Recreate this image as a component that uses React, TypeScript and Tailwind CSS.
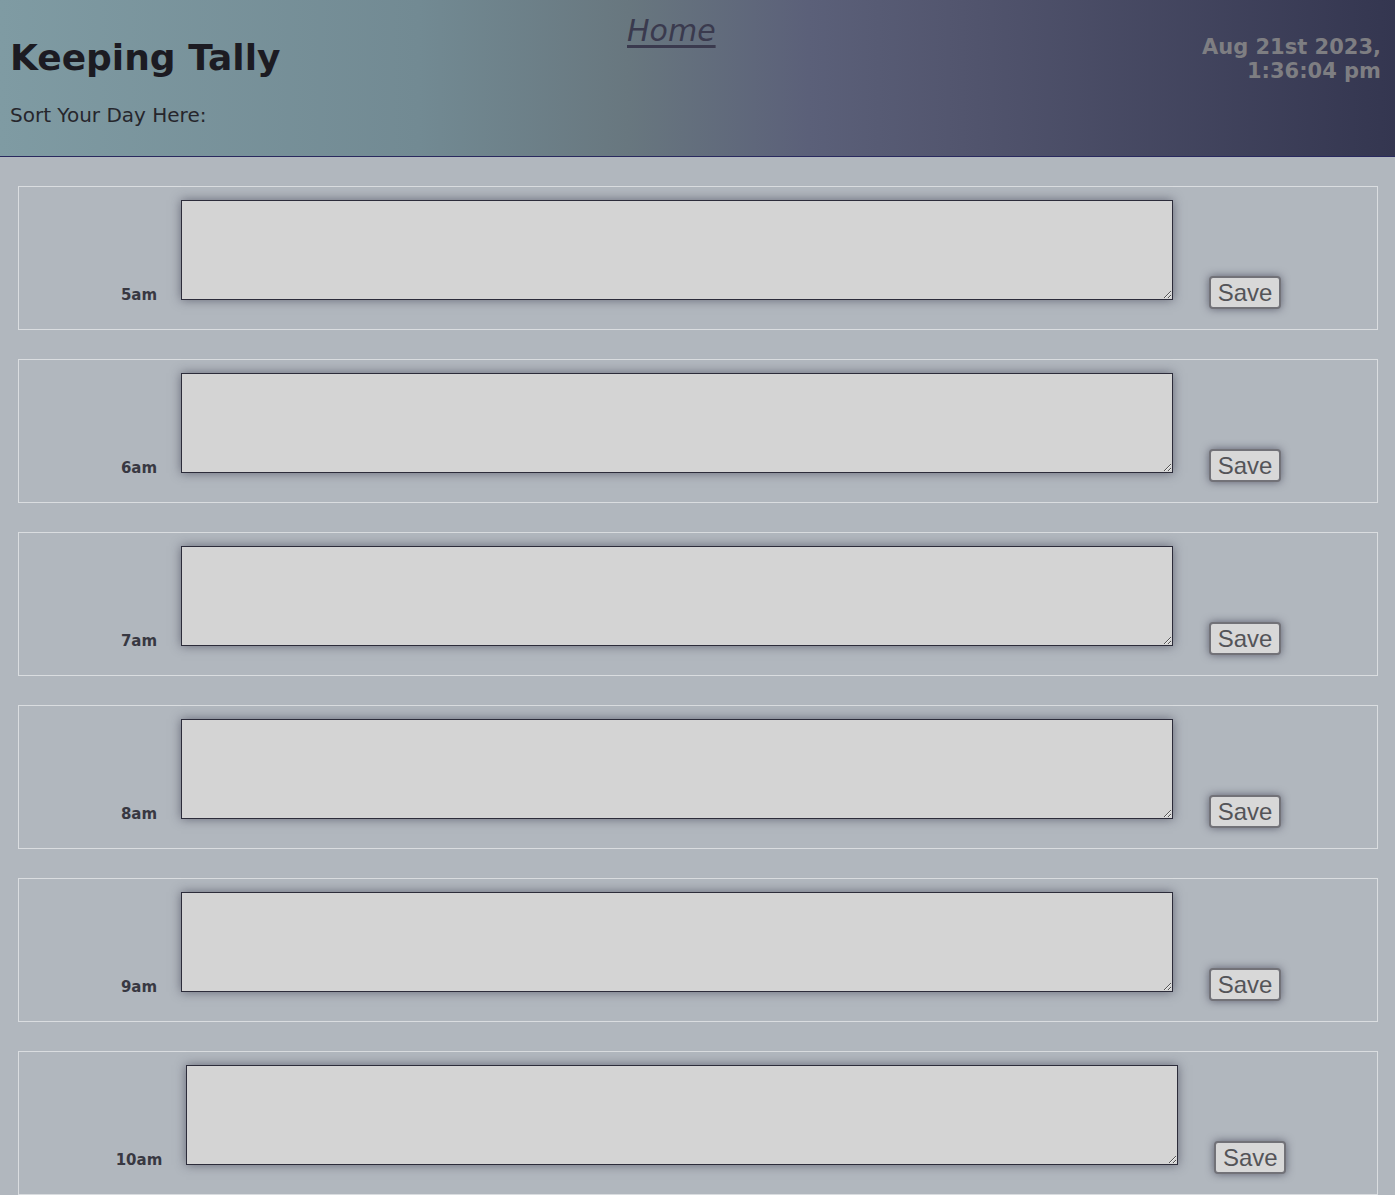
import React from "react";

const hours = ["5am", "6am", "7am", "8am", "9am", "10am", "11am", "12pm", "1pm", "2pm", "3pm", "4pm", "5pm"];

function Row({ label }: { label: string }) {
  return (
    <div className="ml-[18px] mr-[17px] mt-[29px] h-[144px] border border-[#dadde0] pt-[13px]">
      <div className="flex justify-center items-end h-[100px] pl-[6px]">
        <div className="mr-[24px] mb-[-3px] text-[15px] leading-[15px] font-bold text-[#383842]">{label}</div>
        <textarea className="w-[992px] h-[100px] bg-[#d4d4d4] border border-[#2c2c3a] shadow-[0_0_10px_rgba(40,40,60,0.55)] outline-none" />
        <button className="ml-[36px] mb-[-9px] w-[72px] h-[33px] rounded-[4px] border-2 border-[#727278] bg-[#d8d8d8] text-[24px] leading-none text-[#545458] shadow-[0_0_8px_rgba(40,40,60,0.6)] [font-family:'Liberation_Sans',Arial,sans-serif]">
          Save
        </button>
      </div>
    </div>
  );
}

export default function App() {
  return (
    <div className="min-h-screen bg-[#b1b7be] pb-[30px] [font-family:'DejaVu_Sans',Verdana,sans-serif]">
      <header className="h-[157px] border-b border-[#29295e] bg-[linear-gradient(to_right,#7f9ba3_0%,#728a93_30%,#68777f_45%,#5b6079_58%,#53566f_68%,#343650_100%)] flex">
        <div className="w-[627px] pl-[10px] pt-[36px]">
          <h1 className="text-[36px] font-bold leading-[44px] text-[#1c1b22]">Keeping Tally</h1>
          <p className="mt-[20px] text-[20px] text-[#26262c]">Sort Your Day Here:</p>
        </div>
        <div className="pt-[8px]">
          <a className="text-[30px] italic underline text-[#3a3a4e] underline-offset-[4px]">Home</a>
        </div>
        <div className="ml-auto pr-[14px] pt-[35px] text-right text-[21px] font-bold leading-[24px] text-[#7e7e82]">
          <div>Aug 21st 2023,</div>
          <div>1:36:04 pm</div>
        </div>
      </header>
      {hours.map((h) => (
        <Row key={h} label={h} />
      ))}
    </div>
  );
}
